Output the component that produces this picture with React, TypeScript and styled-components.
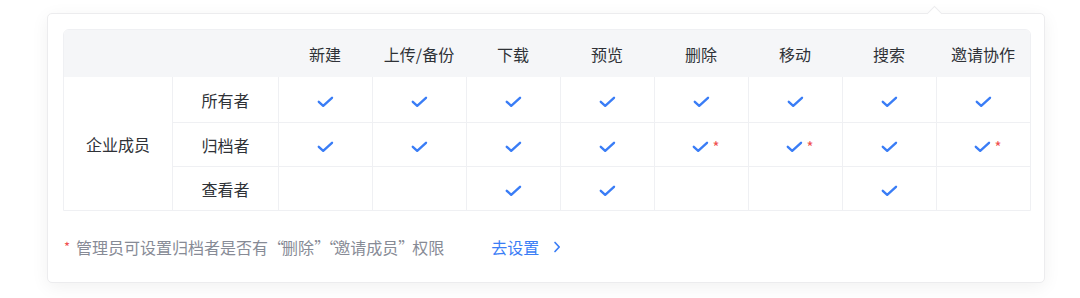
import React from "react";
import styled, { createGlobalStyle } from "styled-components";

const Global = createGlobalStyle`
  html, body { margin: 0; padding: 0; background: #ffffff; }
  body { font-family: "Noto Sans CJK SC", "Noto Sans", sans-serif; }
`;

const Page = styled.div`
  width: 1080px;
  height: 298px;
  padding: 13px 0 0 47px;
  box-sizing: border-box;
`;

const Card = styled.div`
  position: relative;
  width: 998px;
  box-sizing: border-box;
  background: #fff;
  border: 1px solid #ececee;
  border-radius: 5px;
  box-shadow: 0 4px 18px rgba(0, 0, 0, 0.06);
  padding: 15px 13px 0 15px;
  height: 270px;
`;

const Arrow = styled.div`
  position: absolute;
  top: -6px;
  left: 881px;
  width: 10px;
  height: 10px;
  background: #fff;
  border-left: 1px solid #ececee;
  border-top: 1px solid #ececee;
  transform: rotate(45deg);
`;

const Table = styled.table`
  width: 968px;
  border-collapse: separate;
  border-spacing: 0;
  table-layout: fixed;
  border: 1px solid #eff0f3;
  border-radius: 6px 6px 0 0;
  overflow: hidden;
`;

const HeadCell = styled.th`
  height: 47px;
  background: #f5f6f8;
  font-weight: 400;
  font-size: 16px;
  color: #2f3237;
  text-align: center;
  padding: 0;
`;

const Cell = styled.td<{ $first?: boolean }>`
  height: ${(p) => (p.$first ? "45px" : "43px")};
  text-align: center;
  font-size: 16px;
  color: #2f3237;
  padding: 0;
  border-top: ${(p) => (p.$first ? "none" : "1px solid #eff0f3")};
  border-left: 1px solid #eff0f3;
`;

const GroupCell = styled.td`
  text-align: center;
  font-size: 16px;
  color: #2f3237;
  padding: 0;
`;

const Mark = styled.span<{ $starred?: boolean }>`
  position: relative;
  display: inline-flex;
  vertical-align: middle;
  margin-left: ${(p) => (p.$starred ? "-3px" : "0")};
`;

const Star = styled.span`
  position: absolute;
  left: 21px;
  top: -2px;
  color: #f05050;
  font-size: 15px;
  line-height: 16px;
`;

const Footer = styled.div`
  display: flex;
  align-items: center;
  height: 22px;
  margin-top: 25px;
  padding-left: 1px;
  font-size: 16px;
  color: #878b96;
`;

const FootStar = styled.span`
  color: #f05050;
  font-size: 13px;
  margin-right: 6px;
  position: relative;
  top: -1px;
`;

const Quote = styled.span`
  letter-spacing: -2px;
`;

const Link = styled.a`
  display: inline-flex;
  align-items: center;
  margin-left: 47px;
  color: #3a7df6;
  cursor: pointer;
  gap: 14px;
`;

const Check = () => (
  <svg width="17" height="12" viewBox="0 0 17 12">
    <path d="M1.8 5.8 L6.2 9.8 L15 1.8" fill="none" stroke="#3a7df6" strokeWidth="2.4" strokeLinecap="round" strokeLinejoin="round" />
  </svg>
);

const Chevron = () => (
  <svg width="8" height="12" viewBox="0 0 8 12">
    <path d="M2 1.5 L6.2 6 L2 10.5" fill="none" stroke="#3a7df6" strokeWidth="1.7" strokeLinecap="round" strokeLinejoin="round" />
  </svg>
);

type V = 0 | 1 | 2;
const cols = ["新建", "上传/备份", "下载", "预览", "删除", "移动", "搜索", "邀请协作"];
const rows: { role: string; vals: V[] }[] = [
  { role: "所有者", vals: [1, 1, 1, 1, 1, 1, 1, 1] },
  { role: "归档者", vals: [1, 1, 1, 1, 2, 2, 1, 2] },
  { role: "查看者", vals: [0, 0, 1, 1, 0, 0, 1, 0] },
];

const Value = ({ v }: { v: V }) =>
  v === 0 ? null : (
    <Mark $starred={v === 2}>
      <Check />
      {v === 2 && <Star>*</Star>}
    </Mark>
  );

export default function App() {
  return (
    <>
      <Global />
      <Page>
        <Card>
          <Arrow />
          <Table>
            <colgroup>
              <col style={{ width: 108 }} />
              <col style={{ width: 106 }} />
              {cols.map((c) => (
                <col key={c} style={{ width: 94 }} />
              ))}
            </colgroup>
            <thead>
              <tr>
                <HeadCell colSpan={2} />
                {cols.map((c) => (
                  <HeadCell key={c}>{c}</HeadCell>
                ))}
              </tr>
            </thead>
            <tbody>
              {rows.map((r, i) => (
                <tr key={r.role}>
                  {i === 0 && <GroupCell rowSpan={3}>企业成员</GroupCell>}
                  <Cell $first={i === 0}>{r.role}</Cell>
                  {r.vals.map((v, j) => (
                    <Cell key={j} $first={i === 0}>
                      <Value v={v} />
                    </Cell>
                  ))}
                </tr>
              ))}
            </tbody>
          </Table>
          <Footer>
            <FootStar>*</FootStar>
            管理员可设置归档者是否有<Quote>“</Quote>删除<Quote>”“</Quote>邀请成员<Quote>”</Quote>权限
            <Link>
              去设置
              <Chevron />
            </Link>
          </Footer>
        </Card>
      </Page>
    </>
  );
}
